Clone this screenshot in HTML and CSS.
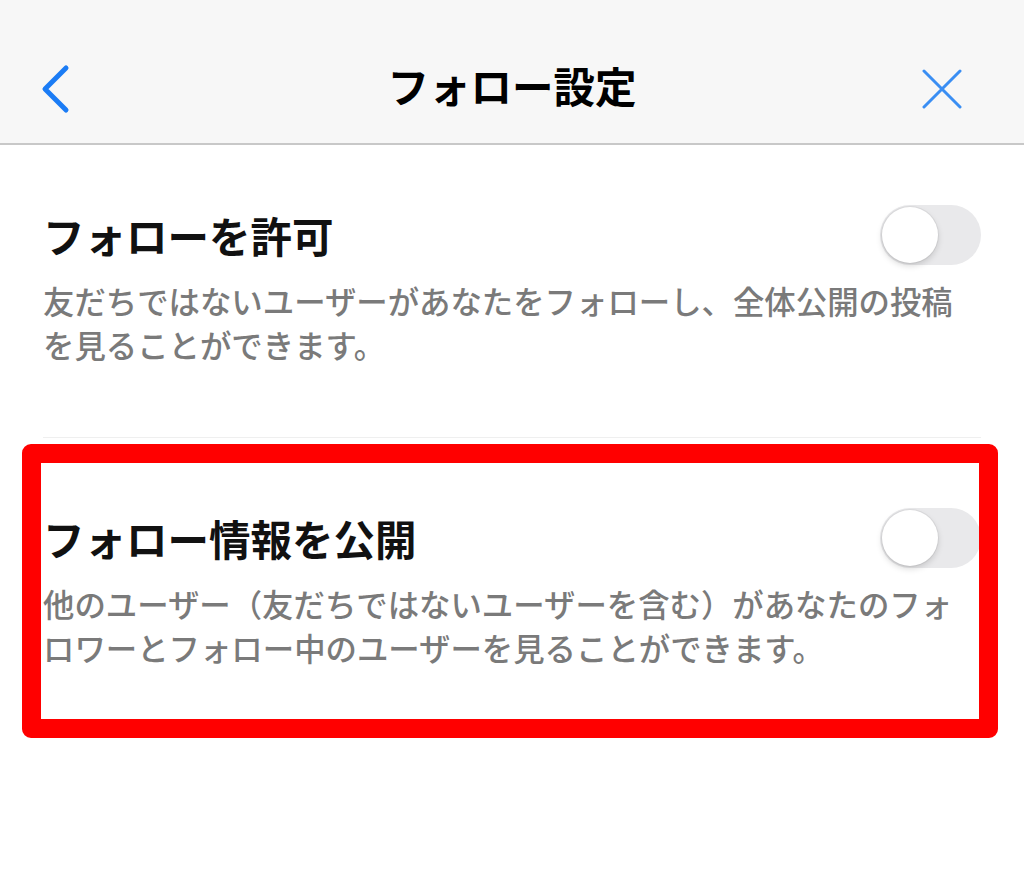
FILE: index.html
```html
<!DOCTYPE html>
<html lang="ja">
<head>
  <meta charset="UTF-8" />
  <meta name="viewport" content="width=device-width, initial-scale=1.0"/>
  <title>フォロー設定</title>
  <link rel="stylesheet" href="styles.css">
</head>
<body>
  <header class="nav">
    <div class="nav-bar">
      <button class="nav-btn back" aria-label="戻る">
        <svg width="30" height="50" viewBox="0 0 30 50">
          <polyline points="26,4 5,25 26,46" fill="none" stroke="#1b7cf5" stroke-width="5" stroke-linecap="round" stroke-linejoin="round"/>
        </svg>
      </button>
      <h1 class="nav-title">フォロー設定</h1>
      <button class="nav-btn close" aria-label="閉じる">
        <svg width="40" height="40" viewBox="0 0 40 40">
          <path d="M2 2 L38 38 M38 2 L2 38" fill="none" stroke="#3a8ef3" stroke-width="3" stroke-linecap="round"/>
        </svg>
      </button>
    </div>
  </header>

  <main class="settings">
    <section class="setting">
      <div class="setting-row">
        <h2 class="setting-title">フォローを許可</h2>
        <span class="toggle"><span class="knob"></span></span>
      </div>
      <p class="setting-desc">友だちではないユーザーがあなたをフォローし、全体公開の投稿を見ることができます。</p>
    </section>

    <section class="setting highlighted">
      <div class="setting-row">
        <h2 class="setting-title">フォロー情報を公開</h2>
        <span class="toggle"><span class="knob"></span></span>
      </div>
      <p class="setting-desc">他のユーザー（友だちではないユーザーを含む）があなたのフォロワーとフォロー中のユーザーを見ることができます。</p>
    </section>
  </main>
</body>
</html>
```

FILE: styles.css
```css
  body {
    margin: 0;
    background: #fff;
    color: #111;
    font-family: "Noto Sans CJK JP", "Noto Sans", sans-serif;
  }

  /* top navigation */
  .nav {
    background: #f7f7f7;
    padding-top: 35px;
    border-bottom: 2px solid #c8c8c8;
  }

  .nav-bar {
    height: 108px;
    display: grid;
    grid-template-columns: 1fr auto 1fr;
    align-items: center;
    padding: 0 40px;
  }

  .nav-btn {
    background: none;
    border: none;
    padding: 0;
    display: flex;
    cursor: pointer;
  }

  .nav-btn.close {
    justify-self: end;
    margin-right: 22px;
  }

  .nav-title {
    margin: 0;
    padding-bottom: 7px;
    font-size: 41.5px;
    font-weight: bold;
    color: #000;
    line-height: 1;
  }

  /* settings list */
  .settings {
    padding: 0 43px;
  }

  .setting {
    position: relative;
    padding: 70px 0;
    border-bottom: 1px solid #efefef;
  }

  .setting:first-child {
    padding-top: 60px;
  }

  .setting:last-child {
    border-bottom: none;
  }

  .setting-row {
    display: flex;
    align-items: center;
    justify-content: space-between;
    height: 60px;
  }

  .setting-title {
    margin: 0;
    font-size: 41.5px;
    font-weight: bold;
    line-height: 60px;
    color: #111;
  }

  .setting-desc {
    margin: 14px 0 0;
    max-width: 925px;
    font-size: 31.4px;
    font-weight: 500;
    line-height: 44px;
    color: #7a7a7a;
  }

  .toggle {
    position: relative;
    width: 101px;
    height: 60px;
    border-radius: 30px;
    background: #e9e9eb;
    flex-shrink: 0;
  }

  .knob {
    position: absolute;
    top: 2px;
    left: 2px;
    width: 56px;
    height: 56px;
    border-radius: 50%;
    background: #fff;
    box-shadow: 0 0 0 1px rgba(0, 0, 0, 0.05), 0 3px 6px rgba(0, 0, 0, 0.15);
  }

  /* red annotation frame */
  .highlighted::after {
    content: "";
    position: absolute;
    top: 6px;
    left: -21px;
    right: -17px;
    bottom: 2px;
    border: 19px solid #ff0000;
    border-radius: 9px;
    pointer-events: none;
  }
```
